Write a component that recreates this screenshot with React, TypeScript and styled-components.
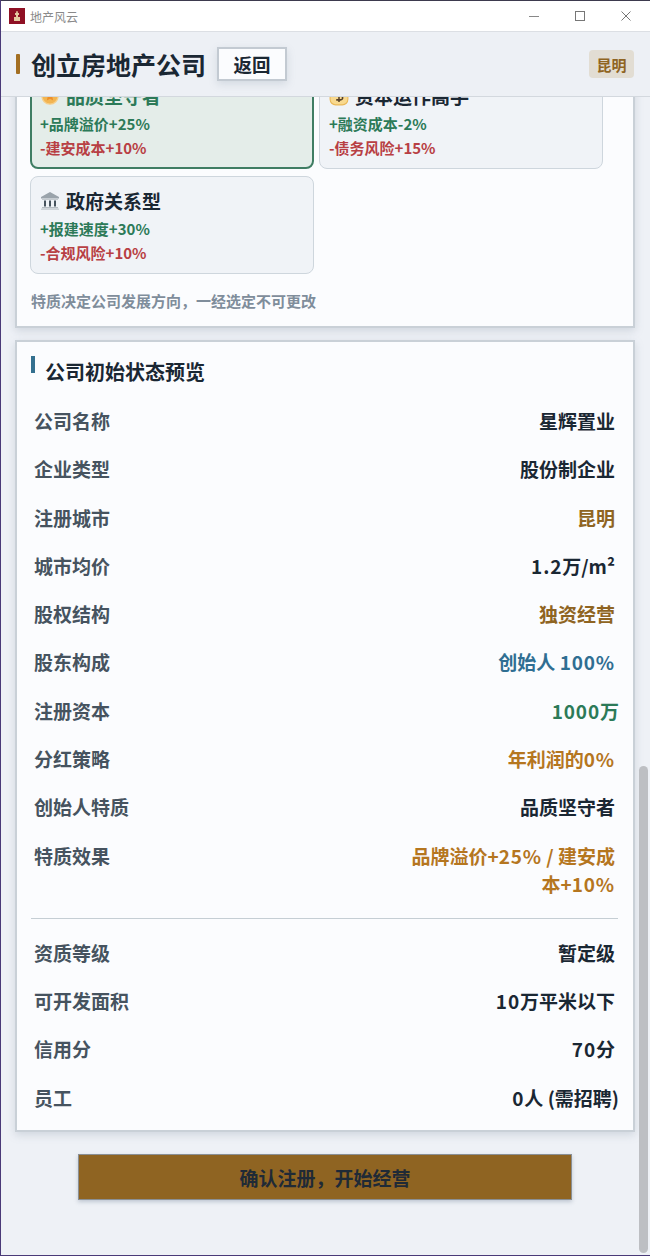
import React from "react";
import styled, { createGlobalStyle } from "styled-components";

const Global = createGlobalStyle`
  html, body { margin: 0; padding: 0; background: #4a3a78; }
  #root { width: 650px; height: 1256px; }
  * { box-sizing: border-box; }
`;

const FONT = `"Noto Sans CJK SC", "Noto Sans", sans-serif`;

const Win = styled.div`
  position: relative;
  width: 649px;
  height: 1255px;
  margin-left: 1px;
  display: flex;
  flex-direction: column;
  background: #eef1f6;
  font-family: ${FONT};
  overflow: hidden;
  border-top: 1px solid #3d3a4e;
`;

const TitleBar = styled.div`
  height: 31px;
  flex: none;
  background: #fff;
  display: flex;
  align-items: center;
  padding-left: 8px;
  padding-right: 1px;
  gap: 5px;
  border-bottom: 1px solid #dcdfe4;
`;

const TitleText = styled.span`
  font-size: 12px;
  color: #8a8a8a;
  flex: 1;
`;

const WinBtns = styled.div`
  display: flex;
`;

const WinBtn = styled.div`
  width: 46px;
  height: 30px;
  display: flex;
  align-items: center;
  justify-content: center;
`;

const Header = styled.div`
  height: 65px;
  flex: none;
  display: flex;
  align-items: center;
  padding: 0 16px 0 15px;
  background: #edf0f5;
  border-bottom: 1px solid #d3d8de;
  position: relative;
  z-index: 2;
`;

const Accent = styled.div`
  width: 4px;
  height: 20px;
  border-radius: 1px;
  background: #a36f22;
  margin-right: 11px;
`;

const PageTitle = styled.h1`
  margin: 0;
  font-size: 25px;
  line-height: 32px;
  font-weight: 700;
  color: #1a2733;
`;

const BackBtn = styled.button`
  margin-left: 11px;
  width: 70px;
  height: 34px;
  background: #fbfcfe;
  border: 2px solid #c3cad2;
  box-shadow: 0 3px 8px rgba(120, 135, 155, 0.22);
  font: 700 18.5px ${FONT};
  color: #1a2733;
  padding: 0;
`;

const CityTag = styled.div`
  margin-left: auto;
  width: 45px;
  height: 28px;
  border-radius: 4px;
  background: #e2ddd3;
  color: #8f6422;
  font-size: 15px;
  font-weight: 700;
  display: flex;
  align-items: center;
  justify-content: center;
`;

const Scroller = styled.div`
  flex: 1;
  overflow: hidden;
  padding: 0 0 0 14px;
`;

const Card = styled.section`
  width: 620px;
  background: #fbfcfe;
  border: 2px solid #c9d0d7;
  box-shadow: 0 3px 8px rgba(120, 135, 155, 0.25);
`;

const TraitCard = styled(Card)`
  margin-top: -71px;
  height: 302px;
  padding: 43px 14px 0 13px;
`;

const TraitGrid = styled.div`
  display: grid;
  grid-template-columns: 284px 284px;
  column-gap: 5px;
  row-gap: 7px;
`;

const Trait = styled.div<{ $on?: boolean }>`
  height: 98px;
  border-radius: 8px;
  border: ${(p) => (p.$on ? "2px solid #3f7d63" : "1px solid #ced6dd")};
  background: ${(p) => (p.$on ? "#e4ede9" : "#f0f3f7")};
  padding: ${(p) => (p.$on ? "6px 0 0 8px" : "7px 0 0 9px")};
`;

const TraitHead = styled.div`
  display: flex;
  align-items: center;
  height: 33px;
  gap: 6px;
`;

const TraitIcon = styled.span`
  width: 20px;
  height: 20px;
  display: flex;
  align-items: center;
  justify-content: center;
`;

const TraitName = styled.span<{ $on?: boolean }>`
  font-size: 19px;
  font-weight: 700;
  color: ${(p) => (p.$on ? "#2c7a58" : "#1a2733")};
`;

const Eff = styled.div<{ $bad?: boolean }>`
  font-size: 15px;
  line-height: 24px;
  font-weight: 700;
  color: ${(p) => (p.$bad ? "#b83f44" : "#2c7a58")};
`;

const Hint = styled.div`
  font-size: 15px;
  line-height: 22px;
  font-weight: 700;
  color: #7f8d9b;
  margin: 16px 0 0 1px;
`;

const PreviewCard = styled(Card)`
  margin-top: 12px;
  height: 792px;
  padding: 14px 15px 0 14px;
`;

const SectionHead = styled.div`
  position: relative;
  padding: 1px 0 0 14px;
  font-size: 20px;
  line-height: 30px;
  font-weight: 700;
  color: #1a2733;
  height: 41px;
`;

const SectionMark = styled.span`
  position: absolute;
  left: 0;
  top: 0;
  width: 4px;
  height: 17px;
  background: #34708f;
`;

const Row = styled.div`
  display: flex;
  justify-content: space-between;
  align-items: flex-start;
  padding: 10px 3px 9.5px;
  font-size: 19px;
  line-height: 28.8px;
  font-weight: 700;
`;

const Label = styled.span`
  color: #46535f;
  flex: none;
`;

const Value = styled.span<{ $c?: string; $flush?: boolean }>`
  color: ${(p) => p.$c || "#1a2733"};
  text-align: right;
  max-width: 210px;
  margin-right: ${(p) => (p.$flush ? "-4px" : "0")};
  white-space: ${(p) => (p.$flush ? "nowrap" : "normal")};
`;

const Num = styled.span`
  letter-spacing: 0.85px;
`;

const Divider = styled.hr`
  border: 0;
  height: 1px;
  background: #c5ced4;
  margin: 9px 0 10px;
`;

const Footer = styled.div`
  display: flex;
  justify-content: center;
  width: 620px;
  padding: 22px 0 0;
`;

const Confirm = styled.button`
  width: 494px;
  height: 46px;
  background: #8f6422;
  border: 1px solid #8a8f94;
  box-shadow: 0 2px 4px rgba(120, 135, 155, 0.4);
  color: #1f2a36;
  font: 700 19px ${FONT};
  padding: 0;
`;

const Thumb = styled.div`
  position: absolute;
  right: 2px;
  top: 765px;
  width: 9px;
  height: 487px;
  border-radius: 5px;
  background: #bdbfc3;
`;

const Logo = () => (
  <svg width="16" height="16" viewBox="0 0 16 16">
    <rect width="16" height="16" fill="#8f1024" />
    <path d="M7.5 3h1l.5 2h1v2H9v2h2v4H5V9h2V7H6V5h1z" fill="#e4c9a0" />
  </svg>
);

const Medal = () => (
  <svg width="20" height="20" viewBox="0 0 16 16">
    <circle cx="8" cy="8" r="6.5" fill="#f2b552" stroke="#f6cf8b" />
    <path d="M8 4l1.2 2.6 2.8.3-2.1 1.9.6 2.8L8 10.2l-2.5 1.4.6-2.8L4 6.9l2.8-.3z" fill="#ee8f2b" />
  </svg>
);

const Coin = () => (
  <svg width="20" height="20" viewBox="0 0 18 18">
    <rect x="1" y="1" width="16" height="16" rx="5" fill="#f8d98f" stroke="#eab95a" />
    <path d="M11.5 5.5H7.5a1.6 1.6 0 000 3.5h3a1.6 1.6 0 010 3.5H6.5M9 3.5v11" stroke="#57422a" strokeWidth="1.4" fill="none" />
  </svg>
);

const Bank = () => (
  <svg width="20" height="20" viewBox="0 0 20 20">
    <path d="M10 1L19 6v1.5H1V6z" fill="#9aa3ab" />
    <rect x="2" y="8" width="16" height="1" fill="#c3c9ce" />
    <path d="M4 9.5h2v6H4zM9 9.5h2v6H9zM14 9.5h2v6h-2z" fill="#47535e" />
    <rect x="2" y="16" width="16" height="1.5" fill="#b4bbc1" />
    <rect x="1" y="17.5" width="18" height="1.5" fill="#ced3d8" />
  </svg>
);

const rowsA: [string, string, string?, boolean?][] = [
  ["公司名称", "星辉置业"],
  ["企业类型", "股份制企业"],
  ["注册城市", "昆明", "#8f6422"],
  ["城市均价", "1.2万/m²"],
  ["股权结构", "独资经营", "#8f6422"],
  ["股东构成", "创始人 100%", "#2f6e92"],
  ["注册资本", "1000万", "#2c7a58", true],
  ["分红策略", "年利润的0%", "#b5761f"],
  ["创始人特质", "品质坚守者"],
  ["特质效果", "品牌溢价+25% / 建安成本+10%", "#b5761f"],
];

const rowsB: [string, string, string?, boolean?][] = [
  ["资质等级", "暂定级"],
  ["可开发面积", "10万平米以下"],
  ["信用分", "70分"],
  ["员工", "0人 (需招聘)", undefined, true],
];

const spaced = (v: string) =>
  v.split(/([0-9.%]+)/).map((part, i) => (i % 2 ? <Num key={i}>{part}</Num> : part));

const renderRow = ([l, v, c, f]: [string, string, string?, boolean?]) => (
  <Row key={l}>
    <Label>{l}</Label>
    <Value $c={c} $flush={f}>{spaced(v)}</Value>
  </Row>
);

export default function App() {
  return (
    <Win>
      <Global />
      <TitleBar>
        <Logo />
        <TitleText>地产风云</TitleText>
        <WinBtns>
          <WinBtn>
            <svg width="10" height="10" viewBox="0 0 10 10"><path d="M0 5.5h10" stroke="#888" /></svg>
          </WinBtn>
          <WinBtn>
            <svg width="10" height="10" viewBox="0 0 10 10"><rect x=".5" y=".5" width="9" height="9" fill="none" stroke="#777" /></svg>
          </WinBtn>
          <WinBtn>
            <svg width="10" height="10" viewBox="0 0 10 10"><path d="M.5.5l9 9M9.5.5l-9 9" stroke="#777" /></svg>
          </WinBtn>
        </WinBtns>
      </TitleBar>
      <Header>
        <Accent />
        <PageTitle>创立房地产公司</PageTitle>
        <BackBtn>返回</BackBtn>
        <CityTag>昆明</CityTag>
      </Header>
      <Scroller>
        <TraitCard>
          <TraitGrid>
            <Trait $on>
              <TraitHead>
                <TraitIcon><Medal /></TraitIcon>
                <TraitName $on>品质坚守者</TraitName>
              </TraitHead>
              <Eff>+品牌溢价+25%</Eff>
              <Eff $bad>-建安成本+10%</Eff>
            </Trait>
            <Trait>
              <TraitHead>
                <TraitIcon><Coin /></TraitIcon>
                <TraitName>资本运作高手</TraitName>
              </TraitHead>
              <Eff>+融资成本-2%</Eff>
              <Eff $bad>-债务风险+15%</Eff>
            </Trait>
            <Trait>
              <TraitHead>
                <TraitIcon><Bank /></TraitIcon>
                <TraitName>政府关系型</TraitName>
              </TraitHead>
              <Eff>+报建速度+30%</Eff>
              <Eff $bad>-合规风险+10%</Eff>
            </Trait>
          </TraitGrid>
          <Hint>特质决定公司发展方向，一经选定不可更改</Hint>
        </TraitCard>
        <PreviewCard>
          <SectionHead>
            <SectionMark />
            公司初始状态预览
          </SectionHead>
          {rowsA.map(renderRow)}
          <Divider />
          {rowsB.map(renderRow)}
        </PreviewCard>
        <Footer>
          <Confirm>确认注册，开始经营</Confirm>
        </Footer>
      </Scroller>
      <Thumb />
    </Win>
  );
}
